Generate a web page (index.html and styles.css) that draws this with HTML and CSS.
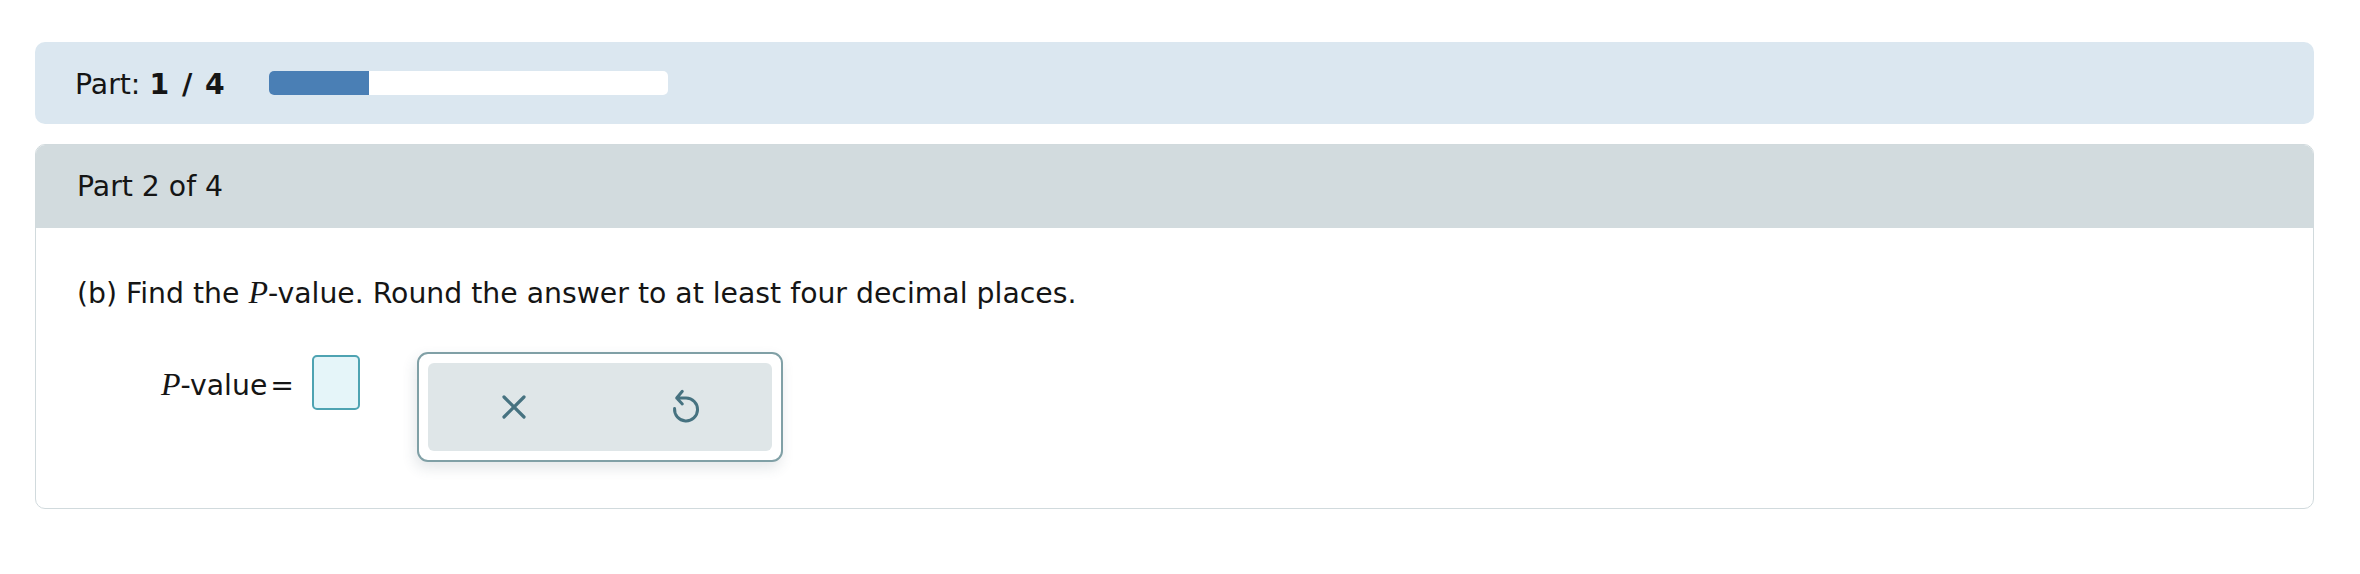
FILE: index.html
```html
<!DOCTYPE html>
<html lang="en">
<head>
<meta charset="utf-8">
<title>Part 2 of 4</title>
<link rel="stylesheet" href="styles.css">
</head>
<body>
<div class="page">
  <div class="progress-panel">
    <span class="part-label">Part: <b>1 / 4</b></span>
    <div class="track"><div class="fill" style="width:25%"></div></div>
  </div>
  <div class="card">
    <div class="card-header">Part 2 of 4</div>
    <div class="card-body">
      <p class="question">(b) Find the <i class="math">P</i>-value. Round the answer to at least four decimal places.</p>
      <div class="answer-row">
        <span class="answer-label"><i class="math">P</i>-value<span class="eq">=</span></span>
        <span class="input-box"></span>
        <div class="keypad">
          <div class="keypad-inner">
            <button class="key" type="button" aria-label="Clear">
              <svg width="24" height="24" viewBox="0 0 24 24"><path d="M2 2 L22 22 M22 2 L2 22" fill="none" stroke="#467280" stroke-width="3.2" stroke-linecap="round"/></svg>
            </button>
            <button class="key" type="button" aria-label="Undo">
              <svg width="28" height="36" viewBox="0 0 28 36"><path d="M10.3 2.3 L4.7 9 L10.3 15 M4.7 9 H14 A11.5 11.5 0 1 1 2.6 19.5" fill="none" stroke="#467280" stroke-width="3" stroke-linecap="round" stroke-linejoin="round"/></svg>
            </button>
          </div>
        </div>
      </div>
    </div>
  </div>
</div>
</body>
</html>
```

FILE: styles.css
```css
html, body {
  margin: 0;
  padding: 0;
  background: #ffffff;
}
body {
  font-family: "DejaVu Sans", Verdana, sans-serif;
  color: #151515;
}
.page {
  padding: 42px 46px 0 35px;
}
.progress-panel {
  height: 82px;
  box-sizing: border-box;
  background: #dbe7f0;
  border-radius: 10px;
  padding-left: 40px;
  display: flex;
  align-items: center;
}
.part-label {
  font-size: 28.3px;
  line-height: 40px;
  margin-top: 3px;
}
.part-label b {
  font-weight: bold;
  letter-spacing: 1.5px;
}
.track {
  margin-left: 43px;
  width: 399px;
  height: 24px;
  background: #ffffff;
  border-radius: 5px;
  overflow: hidden;
}
.fill {
  height: 100%;
  background: #4a7fb5;
}
.card {
  margin-top: 20px;
  border: 1.5px solid #d1dadd;
  border-radius: 10px;
  overflow: hidden;
}
.card-header {
  height: 83px;
  background: #d2dbde;
  padding-left: 41px;
  font-size: 28.3px;
  line-height: 83px;
}
.card-body {
  padding: 44px 40px 46px 41px;
}
.question {
  margin: 0;
  font-size: 28.3px;
  line-height: 40px;
}
.math {
  font-family: "Liberation Serif", "Times New Roman", serif;
  font-style: italic;
  font-size: 32px;
}
.answer-row {
  margin-top: 38px;
  display: flex;
  align-items: flex-start;
}
.answer-label {
  margin-left: 84px;
  margin-top: 12px;
  font-size: 28.3px;
  line-height: 40px;
}
.eq {
  margin-left: 3px;
}
.input-box {
  margin-left: 18px;
  margin-top: 3px;
  width: 48px;
  height: 55px;
  box-sizing: border-box;
  border: 2px solid #4ea3b2;
  border-radius: 5px;
  background: #e5f5f9;
}
.keypad {
  margin-left: 57px;
  width: 366px;
  height: 110px;
  box-sizing: border-box;
  border: 2px solid #80a0a6;
  border-radius: 11px;
  padding: 9px;
  background: #ffffff;
  box-shadow: -2px 6px 14px rgba(60, 80, 90, 0.14);
}
.keypad-inner {
  height: 100%;
  background: #dfe6e8;
  border-radius: 6px;
  display: flex;
}
.key {
  flex: 1;
  border: 0;
  background: transparent;
  padding: 0;
  display: flex;
  align-items: center;
  justify-content: center;
}
.key svg {
  display: block;
}
```
